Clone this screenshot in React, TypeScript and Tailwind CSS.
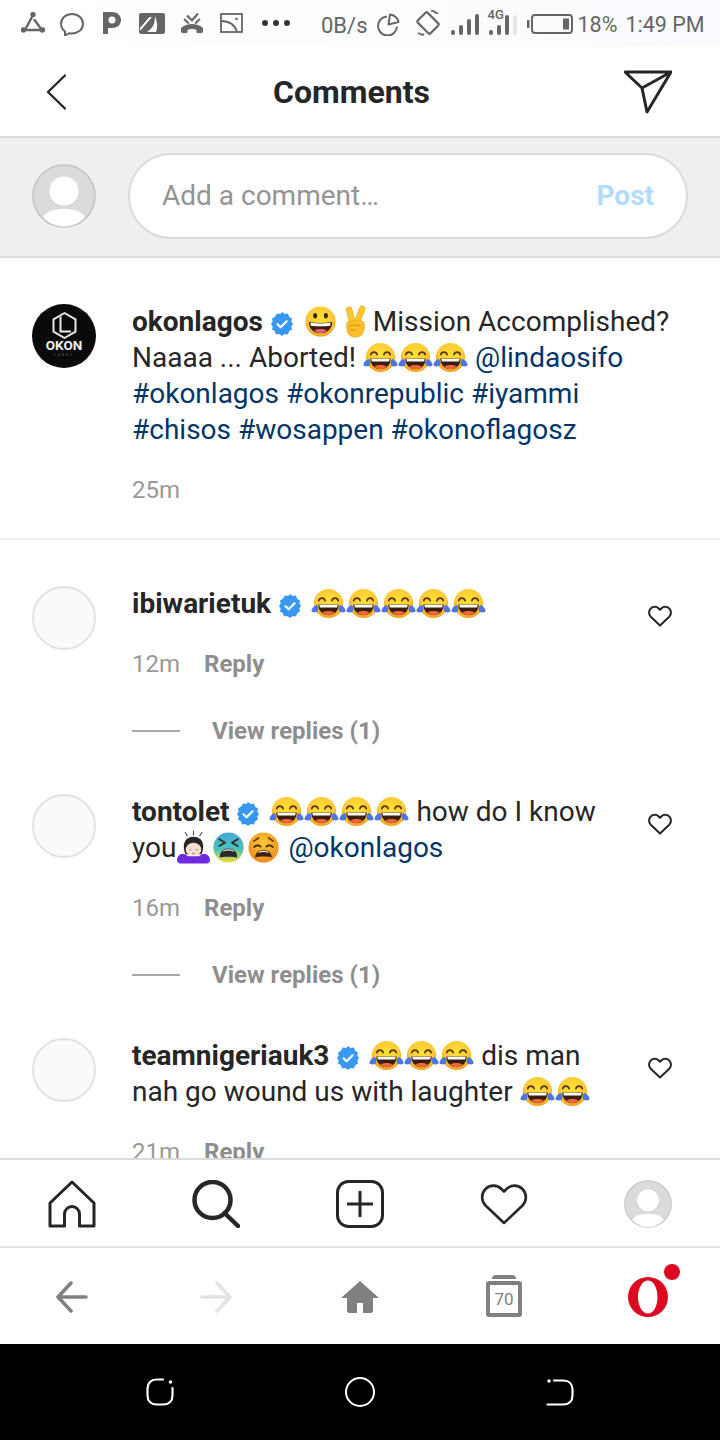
const FACE = (
  <defs>
    <radialGradient id="face" cx="50%" cy="42%" r="58%">
      <stop offset="0%" stopColor="#FEE133" />
      <stop offset="72%" stopColor="#FDCB35" />
      <stop offset="100%" stopColor="#F19C1F" />
    </radialGradient>
    <radialGradient id="orange" cx="50%" cy="35%" r="65%">
      <stop offset="0%" stopColor="#FDC934" />
      <stop offset="100%" stopColor="#EF8A1E" />
    </radialGradient>
    <linearGradient id="cold" x1="0" y1="0" x2="0" y2="1">
      <stop offset="0%" stopColor="#3FA9D6" />
      <stop offset="55%" stopColor="#4CC2B8" />
      <stop offset="100%" stopColor="#F6DC3A" />
    </linearGradient>
  </defs>
)

const EMOJI = 'inline-block w-[35px] h-[35px] align-[-8px]'

function Laugh() {
  return (
    <svg viewBox="0 0 36 36" className={EMOJI}>
      {FACE}
      <circle cx="18" cy="18" r="15" fill="url(#face)" />
      <path d="M8 15c1-3.500 5.500-3.500 6.500 0M21.500 15c1-3.500 5.500-3.500 6.500 0" fill="none" stroke="#5b3413" strokeWidth="1.800" strokeLinecap="round" />
      <path d="M7.500 19h21c0 6.500-4.500 11-10.500 11S7.500 25.500 7.500 19z" fill="#3b1d0d" />
      <path d="M8.500 19.300h19l-.7 2.800H9.200z" fill="#fff" />
      <path d="M11.500 27.500c2-2.500 11-2.500 13 0-1.800 1.700-4 2.500-6.500 2.500s-4.700-.8-6.500-2.500z" fill="#F0663C" />
      <path d="M.5 25.500c.3-2.800 3-5.500 5.500-6 1.500 2 2.500 4.500 1 6.500-1.500 1.700-6.700 1.700-6.500-.5z" fill="#4F74E3" />
      <path d="M35.500 25.500c-.3-2.800-3-5.500-5.500-6-1.500 2-2.500 4.500-1 6.500 1.500 1.700 6.700 1.700 6.500-.5z" fill="#4F74E3" />
    </svg>
  )
}

function Grin() {
  return (
    <svg viewBox="0 0 36 36" className={EMOJI}>
      {FACE}
      <circle cx="18" cy="18" r="15.500" fill="url(#face)" />
      <ellipse cx="12.500" cy="12" rx="2.100" ry="2.800" fill="#3b2412" />
      <ellipse cx="23.500" cy="12" rx="2.100" ry="2.800" fill="#3b2412" />
      <path d="M6 18.500c8 1.500 16 1.500 24 0 0 7-5 11.500-12 11.500S6 25.500 6 18.500z" fill="#3b1d0d" />
      <path d="M7.500 19.300c7 1 14 1 21 0l-.6 3c-6 .9-13.800.9-19.800 0z" fill="#fff" />
      <path d="M11.500 27.500c2.500-2.500 10.500-2.500 13 0-1.800 1.500-4 2.300-6.500 2.300s-4.700-.8-6.500-2.300z" fill="#EF5F7A" />
    </svg>
  )
}

function Victory() {
  return (
    <svg viewBox="0 0 36 36" className={EMOJI}>
      <path d="M15 20L11.500 6" stroke="#F2A922" strokeWidth="6.500" strokeLinecap="round" />
      <path d="M19 20L25 5" stroke="#F2A922" strokeWidth="6.500" strokeLinecap="round" />
      <path d="M15 20L11.500 6" stroke="#FBC82E" strokeWidth="5" strokeLinecap="round" />
      <path d="M19 20L25 5" stroke="#FBC82E" strokeWidth="5" strokeLinecap="round" />
      <path d="M9 21c0-2.500 2-3.500 4-3 3-1.500 8-1 11.500-.5 2 .3 2.500 2 2.500 4 0 3.500 0 6-1.500 8.500-1.500 2.500-4 4-7.500 4-5 0-8-3-8.500-6.500-.3-2.500-.5-4.500-.5-6.500z" fill="#FBBF2A" stroke="#F0A31F" strokeWidth=".8" />
      <path d="M12 22.500c3-1 7-1 10 0M13 26c1.500 1 3.500 1.200 5 .5" fill="none" stroke="#E8951C" strokeWidth="1.200" strokeLinecap="round" />
    </svg>
  )
}

function Bowing() {
  return (
    <svg viewBox="0 0 36 36" className={EMOJI}>
      <path d="M18 1v4M9.500 2.500l2 3.500M26.500 2.500l-2 3.500" stroke="#555" strokeWidth="1.200" strokeLinecap="round" />
      <path d="M18 7c-6.500 0-10 4.500-10 10 0 3 .8 6 2 8h16c1.200-2 2-5 2-8 0-5.500-3.500-10-10-10z" fill="#2a2321" />
      <ellipse cx="18" cy="20" rx="8" ry="7" fill="#F6DFD3" />
      <path d="M13.500 20c.7.700 1.500.700 2.200 0M20.300 20c.7.700 1.500.700 2.200 0M16.500 24c1 .4 2 .4 3 0" stroke="#7a5a4a" strokeWidth=".8" fill="none" />
      <path d="M1 31c0-3.500 3-6.500 6-6.500 2 0 4 1.500 5.500 2.500h11c1.500-1 3.500-2.500 5.500-2.500 3 0 6 3 6 6.500 0 2.500-2.500 3.500-5 3.500H6c-2.500 0-5-1-5-3.500z" fill="#6F2BE0" />
    </svg>
  )
}

function ColdFace() {
  return (
    <svg viewBox="0 0 36 36" className={EMOJI}>
      {FACE}
      <circle cx="18" cy="18" r="15.500" fill="url(#cold)" />
      <path d="M8.500 9.500l6 3.500-6 3.500M27.500 9.500l-6 3.500 6 3.500" fill="none" stroke="#2b2a28" strokeWidth="1.800" strokeLinecap="round" strokeLinejoin="round" />
      <path d="M9 28.500c0-6 3.500-9.500 9-9.500s9 3.500 9 9.500c-2-1.300-16-1.300-18 0z" fill="#2b2a28" />
      <path d="M12 22.500c3.500-1.800 8.500-1.800 12 0l-1.200-1.800c-3-1.300-6.600-1.300-9.600 0z" fill="#fff" />
    </svg>
  )
}

function Weary() {
  return (
    <svg viewBox="0 0 36 36" className={EMOJI}>
      {FACE}
      <circle cx="18" cy="18" r="15.500" fill="url(#orange)" />
      <path d="M8 11.500l5-3.500M28 11.500L23 8" stroke="#5b3413" strokeWidth="1.500" strokeLinecap="round" />
      <path d="M8.500 17.500c1.500-2 4.500-2.500 6.500-.5M27.500 17.500c-1.500-2-4.500-2.500-6.500-.5" fill="none" stroke="#3b2412" strokeWidth="1.800" strokeLinecap="round" />
      <path d="M9.500 28.500c0-5 3.500-8 8.500-8s8.500 3 8.500 8c-2.500-1.500-14.500-1.500-17 0z" fill="#3b2412" />
      <path d="M12.500 24c3-1.800 8-1.800 11 0l-1.300-1.800c-2.500-1.200-5.900-1.200-8.400 0z" fill="#fff" />
    </svg>
  )
}

function Badge() {
  return (
    <svg viewBox="0 0 24 24" className="inline-block w-6 h-6 mr-[2px] align-[-5px]">
      <path d="M12 0l2.700 1.900 3.300-.3 1.100 3.100 2.900 1.700-.7 3.200L23 12l-1.700 2.400.7 3.200-2.900 1.700-1.100 3.100-3.300-.3L12 24l-2.700-1.900-3.300.3-1.100-3.100-2.900-1.700.7-3.200L1 12l1.700-2.400-.7-3.200 2.900-1.700L7 1.600l3.300.3z" fill="#3897F0" />
      <path d="M7.500 12.300l3.100 3 6-6" fill="none" stroke="#fff" strokeWidth="2.200" strokeLinecap="round" strokeLinejoin="round" />
    </svg>
  )
}

function Heart({ className, stroke }: { className: string; stroke: string }) {
  return (
    <svg viewBox="0 0 48 44" className={className} fill="none" stroke="#262626" strokeWidth={stroke} strokeLinejoin="round">
      <path d="M24 41L5.500 23.500C1 19 1 11.500 5.500 7c4.500-4.500 11.500-4.500 16 0L24 9.500 26.500 7c4.500-4.500 11.500-4.500 16 0 4.500 4.500 4.500 12 0 16.500z" />
    </svg>
  )
}

function ProfilePic({ size }: { size: string }) {
  return (
    <svg viewBox="0 0 64 64" className={size}>
      <circle cx="32" cy="32" r="31" fill="#dbdbdb" stroke="#c4c4c4" strokeWidth="1.500" />
      <circle cx="32" cy="27" r="14.500" fill="#fff" />
      <path d="M11 53c3-6 12-8 21-8s18 2 21 8c-5.500 6-13 9.500-21 9.500S16.500 59 11 53z" fill="#fff" />
    </svg>
  )
}

function OkonLogo() {
  return (
    <svg viewBox="0 0 64 64" className="w-16 h-16 shrink-0">
      <circle cx="32" cy="32" r="32" fill="#0a0a0a" />
      <path d="M32.500 9l11 6.300v12.400l-11 6.300-11-6.300V15.300z" fill="none" stroke="#e8e8e8" strokeWidth="2" strokeLinejoin="round" />
      <path d="M28.500 12.500v15h10.500" fill="none" stroke="#e8e8e8" strokeWidth="2" />
      <text x="32" y="46" textAnchor="middle" fontSize="13.500" fontWeight="700" fill="#f2f2f2" fontFamily="Roboto, sans-serif">OKON</text>
      <text x="32" y="52" textAnchor="middle" fontSize="3" letterSpacing="2" fill="#777" fontFamily="Roboto, sans-serif">LAGOS</text>
    </svg>
  )
}

function Avatar() {
  return <div className="w-16 h-16 rounded-full bg-[#fafafa] border-2 border-[#e3e3e3] shrink-0" />
}

function Line({ children }: { children: React.ReactNode }) {
  return <span className="block h-9 whitespace-nowrap">{children}</span>
}

function Name({ children }: { children: string }) {
  return <span className="font-bold text-[#262626]">{children}</span>
}

function Link({ children }: { children: string }) {
  return <span className="text-[#003569]">{children}</span>
}

function Meta({ time }: { time: string }) {
  return (
    <div className="flex gap-6 mt-6 text-2xl leading-9 text-[#999]">
      <span>{time}</span>
      <span className="font-bold text-[#8e8e8e]">Reply</span>
    </div>
  )
}

function ViewReplies() {
  return (
    <div className="flex items-center gap-8 mt-[31px] h-9">
      <div className="w-12 h-0.5 bg-[#a8a8a8]" />
      <span className="text-2xl font-bold text-[#8e8e8e]">View replies (1)</span>
    </div>
  )
}

function Comment({ children, meta, replies }: { children: React.ReactNode; meta: string; replies?: boolean }) {
  return (
    <div className="flex pl-8 pr-12 mb-[45px]">
      <Avatar />
      <div className="flex-1 ml-9">
        <div className="text-[28px] leading-9 text-[#262626]">{children}</div>
        <Meta time={meta} />
        {replies && <ViewReplies />}
      </div>
      <Heart className="w-6 h-[22px] mt-[19px] shrink-0" stroke="4" />
    </div>
  )
}

function StatusBar() {
  return (
    <div className="flex items-center h-[46px] bg-gradient-to-r from-white to-[#f9fbfe] text-[22px] text-[#666] shrink-0">
      <svg viewBox="0 0 24 22" className="w-6 h-[22px] ml-[21px]" fill="none" stroke="#666" strokeWidth="2.400" strokeLinecap="round">
        <path d="M12 3L4 18h17L13.500 8" />
        <circle cx="12" cy="2.500" r="1.500" fill="#666" />
        <circle cx="2.500" cy="18" r="1.500" fill="#666" />
        <circle cx="21.500" cy="18" r="1.500" fill="#666" />
      </svg>
      <svg viewBox="0 0 24 24" className="w-6 h-6 ml-[15px] mt-0.5" fill="none" stroke="#666" strokeWidth="2">
        <path d="M12 2c6 0 11 4 11 10 0 5.500-5 9.500-11 9.500-1.200 0-2.200-.1-3-.3L5 23.500v-4C2.500 17.500 1 15 1 12 1 6 6 2 12 2z" />
      </svg>
      <svg viewBox="0 0 18 22" className="w-[18px] h-[22px] ml-[19px]" fill="#666">
        <path fillRule="evenodd" d="M0 0h9c5 0 9 3 9 8s-4 8-9 8H5v6H0zm9 4.500a3.500 3.500 0 100 7 3.500 3.500 0 000-7z" />
      </svg>
      <svg viewBox="0 0 26 21" className="w-[26px] h-[21px] ml-[18px]">
        <rect width="26" height="21" rx="2" fill="#666" />
        <path d="M1 18L13 4h-2.500L1 15zM16 3c0 8-2 12-8 16h9c2-5 1-11-1-16z" fill="#fff" />
      </svg>
      <svg viewBox="0 0 24 22" className="w-6 h-[22px] ml-[15px]" fill="#666">
        <path d="M7 3.500l5 5 6-7" fill="none" stroke="#666" strokeWidth="2.200" />
        <path d="M4 7l5 4.500M20 7l-5 4.500" fill="none" stroke="#666" strokeWidth="2" />
        <path d="M12 12c-4 0-8 1.500-11 4v3.500c0 1 1 1.500 2 1.500h3c1 0 1.500-.5 1.500-1.500V18c1.500-.7 2.500-1 4.500-1s3 .3 4.500 1v1.500c0 1 .5 1.500 1.500 1.500h3c1 0 2-.5 2-1.500V16c-3-2.500-7-4-11-4z" />
      </svg>
      <svg viewBox="0 0 23 20" className="w-[23px] h-5 ml-4" fill="none" stroke="#666" strokeWidth="1.800">
        <rect x="1" y="1" width="21" height="18" />
        <path d="M1 8c8 0 14 4 16 11" />
        <circle cx="16.500" cy="6" r="1.300" fill="#666" stroke="none" />
      </svg>
      <div className="flex gap-[5px] ml-[19px]">
        <span className="w-[6px] h-[6px] rounded-full bg-[#333]" />
        <span className="w-[6px] h-[6px] rounded-full bg-[#333]" />
        <span className="w-[6px] h-[6px] rounded-full bg-[#333]" />
      </div>
      <span className="ml-[31px] mt-1">0B/s</span>
      <svg viewBox="0 0 23 23" className="w-[23px] h-[23px] ml-[9px] mt-0.5" fill="none" stroke="#666" strokeWidth="2">
        <path d="M10 3.500a9.500 9.500 0 1010 10" />
        <path d="M13 1.500c4.500.3 8 3.800 8.500 7.500l-10 2.500z" strokeLinejoin="round" />
      </svg>
      <svg viewBox="0 0 28 28" className="w-7 h-7 ml-[14px]" fill="none" stroke="#666" strokeWidth="2.200">
        <rect x="7" y="5" width="14" height="18" rx="1.500" transform="rotate(-45 14 14)" />
        <path d="M17 2c2-.5 4 1 4 1s1 1.500 3 1M4 24c2 .5 4 2 4 2s1.500-.5 2-1" strokeWidth="1.800" />
      </svg>
      <div className="flex items-end gap-[4px] ml-[9px] h-[21px] mt-0.5">
        <span className="w-[4px] h-[5px] bg-[#666] rounded-sm" />
        <span className="w-[4px] h-[10px] bg-[#666] rounded-sm" />
        <span className="w-[4px] h-[16px] bg-[#666] rounded-sm" />
        <span className="w-[4px] h-[21px] bg-[#666] rounded-sm" />
      </div>
      <div className="relative flex items-end gap-[4px] ml-[10px] h-[21px] mt-0.5">
        <span className="w-[4px] h-[5px] bg-[#666] rounded-sm" />
        <span className="w-[4px] h-[10px] bg-[#666] rounded-sm" />
        <span className="w-[4px] h-[20px] bg-[#666] rounded-sm" />
        <span className="w-[4px] h-[20px] bg-[#e5e5e5] rounded-sm" />
        <span className="absolute -top-[6px] -left-px text-[13px] leading-none font-medium bg-[#fafbfe]">4G</span>
      </div>
      <svg viewBox="0 0 46 20" className="w-[46px] h-5 ml-[10px] mt-px" fill="none" stroke="#666" strokeWidth="2">
        <rect x="5" y="1" width="40" height="18" rx="3" />
        <rect x="0" y="6" width="2.500" height="8" fill="#666" stroke="none" />
        <rect x="36" y="4.500" width="6" height="11" fill="#666" stroke="none" />
      </svg>
      <span className="ml-[5px] mt-1 text-[21.5px] whitespace-nowrap">18%</span>
      <span className="ml-[8px] mt-1 text-[21.5px] whitespace-nowrap">1:49 PM</span>
    </div>
  )
}

export default function App() {
  return (
    <div className="flex flex-col w-[720px] h-[1440px] overflow-hidden bg-white font-['Roboto',sans-serif]">
      <StatusBar />

      <div className="relative flex items-center justify-between h-[90px] pt-[2px] pl-[46px] pr-[48px] shrink-0">
        <svg viewBox="0 0 20 36" className="w-5 h-9" fill="none" stroke="#262626" strokeWidth="2.400" strokeLinecap="round" strokeLinejoin="round">
          <path d="M19 1.500L2 18l17 16.500" />
        </svg>
        <h1 className="absolute left-[273px] text-[32px] font-bold text-[#262626] leading-none">Comments</h1>
        <svg viewBox="0 0 48 44" className="w-12 h-11" fill="none" stroke="#262626" strokeWidth="3" strokeLinejoin="round">
          <path d="M1 2h46L23 42 18 18zM18 18L47 2" />
        </svg>
      </div>

      <div className="flex items-center gap-8 h-[122px] pb-[2px] px-8 bg-[#efefef] border-y-2 border-[#dbdbdb] shrink-0">
        <ProfilePic size="w-16 h-16 shrink-0" />
        <div className="flex items-center justify-between flex-1 h-[86px] pl-[32px] pr-8 bg-white rounded-full border-2 border-[#dbdbdb]">
          <span className="text-[28px] text-[#949494]">Add a comment…</span>
          <span className="text-[28px] font-bold text-[#b3dbff]">Post</span>
        </div>
      </div>

      <div className="flex-1 overflow-hidden">
        <div className="flex px-8 pt-[46px] pb-[30px] border-b-2 border-[#efefef]">
          <OkonLogo />
          <div className="flex-1 ml-9">
            <div className="text-[28px] leading-9 text-[#262626]">
              <Line><Name>okonlagos</Name> <Badge /> <Grin /><Victory />Mission Accomplished?</Line>
              <Line>Naaaa ... Aborted! <Laugh /><Laugh /><Laugh /> <Link>@lindaosifo</Link></Line>
              <Line><Link>#okonlagos #okonrepublic #iyammi</Link></Line>
              <Line><Link>#chisos #wosappen #okonoflagosz</Link></Line>
            </div>
            <div className="mt-6 text-2xl leading-9 text-[#999]">25m</div>
          </div>
        </div>

        <div className="pt-[46px]">
          <Comment meta="12m" replies>
            <Line><Name>ibiwarietuk</Name> <Badge /> <Laugh /><Laugh /><Laugh /><Laugh /><Laugh /></Line>
          </Comment>
          <Comment meta="16m" replies>
            <Line><Name>tontolet</Name> <Badge /> <Laugh /><Laugh /><Laugh /><Laugh /> how do I know</Line>
            <Line>you<Bowing /><ColdFace /><Weary /> <Link>@okonlagos</Link></Line>
          </Comment>
          <Comment meta="21m">
            <Line><Name>teamnigeriauk3</Name> <Badge /> <Laugh /><Laugh /><Laugh /> dis man</Line>
            <Line>nah go wound us with laughter <Laugh /><Laugh /></Line>
          </Comment>
        </div>
      </div>

      <div className="grid grid-cols-5 place-items-center h-[88px] pt-[2px] bg-white border-t-2 border-[#dbdbdb] shrink-0">
        <svg viewBox="0 0 48 48" className="w-12 h-12" fill="none" stroke="#262626" strokeWidth="3" strokeLinejoin="round">
          <path d="M24 2L2 23v23h14.500V34a7.500 7.500 0 0115 0v12H46V23z" />
        </svg>
        <svg viewBox="0 0 48 48" className="w-12 h-12" fill="none" stroke="#262626" strokeWidth="4.500" strokeLinecap="round">
          <circle cx="20.500" cy="20" r="18" />
          <path d="M32.500 33L46 46" />
        </svg>
        <svg viewBox="0 0 48 48" className="w-12 h-12" fill="none" stroke="#262626" strokeWidth="3">
          <rect x="1.500" y="1.500" width="45" height="45" rx="11" />
          <path d="M24 11v26M11 24h26" />
        </svg>
        <Heart className="w-12 h-11" stroke="2.600" />
        <ProfilePic size="w-12 h-12" />
      </div>

      <div className="grid grid-cols-5 place-items-center h-[98px] pt-[2px] bg-white border-t-2 border-[#e3e3e3] shrink-0">
        <svg viewBox="0 0 32 32" className="w-8 h-8" fill="none" stroke="#808080" strokeWidth="3.500" strokeLinecap="round" strokeLinejoin="round">
          <path d="M30 16H3M15 2L2 16l13 14" />
        </svg>
        <svg viewBox="0 0 32 32" className="w-8 h-8" fill="none" stroke="#e3e3e3" strokeWidth="3.500" strokeLinecap="round" strokeLinejoin="round">
          <path d="M2 16h27M17 2l13 14-13 14" />
        </svg>
        <svg viewBox="0 0 38 32" className="w-[38px] h-8" fill="#808080">
          <path d="M19 0L0 17h6v13c0 1 1 2 2 2h8v-10h6v10h8c1 0 2-1 2-2V17h6z" />
        </svg>
        <div className="relative flex items-center justify-center w-9 h-9 mt-1 rounded-[3px] border-[4px] border-[#808080] text-[17px] leading-none text-[#808080]">
          70
          <span className="absolute -top-[10px] left-[2px] right-[2px] h-[4px] bg-[#808080] rounded-t-sm" />
        </div>
        <svg viewBox="0 0 64 56" className="w-16 h-14 overflow-visible">
          <path fillRule="evenodd" d="M32 8a20 20 0 100 40 20 20 0 000-40zm0 3.500c5.500 0 9.500 7.500 9.500 16.500S37.500 44.500 32 44.500 22 37 22 28s4.500-16.500 10-16.500z" fill="#DC0A20" />
          <circle cx="56" cy="3" r="8" fill="#DC0A20" />
        </svg>
      </div>

      <div className="flex items-center justify-center gap-[171px] h-24 bg-black shrink-0">
        <svg viewBox="0 0 28 28" className="w-7 h-7" fill="none" stroke="#fff" strokeWidth="2.200" strokeLinecap="round">
          <path d="M17 1.500h-6.500c-5.500 0-9 3.500-9 9v7c0 5.500 3.500 9 9 9h7c5.500 0 9-3.500 9-9v-7.500" />
          <circle cx="24.500" cy="4" r="1.800" fill="#fff" stroke="none" />
        </svg>
        <div className="w-[30px] h-[30px] rounded-full border-[2.400px] border-white" />
        <svg viewBox="0 0 28 28" className="w-7 h-7" fill="none" stroke="#fff" strokeWidth="2.200" strokeLinecap="round">
          <path d="M8 2.500h9.500c5.500 0 9 3.500 9 9v6c0 5.500-3.500 9-9 9H1.500" />
          <circle cx="3" cy="3" r="1.800" fill="#fff" stroke="none" />
        </svg>
      </div>
    </div>
  )
}
